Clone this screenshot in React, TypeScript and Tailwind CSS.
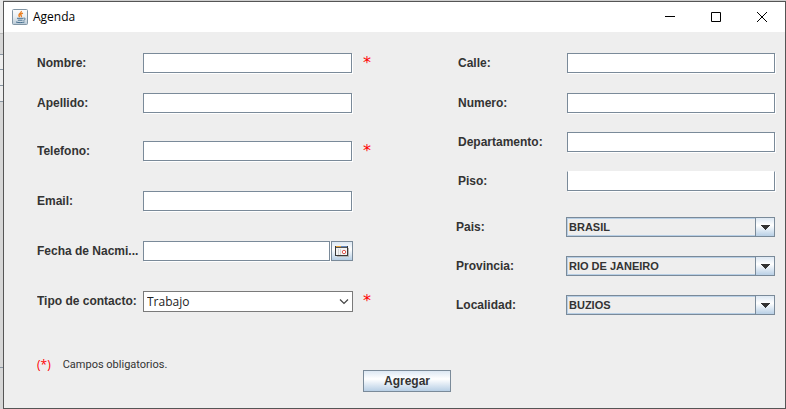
import React from "react";

const labelClass = "h-5 shrink-0 truncate text-xs leading-5 font-bold text-[#333]";
const fieldClass =
  "h-5 w-full min-w-0 border border-[#7a8a99] bg-white px-1 text-xs text-[#333] shadow-[1px_1px_0_#fff] outline-none";

function Field({ id, label, required, children }: { id: string; label: string; required?: boolean; children?: React.ReactNode }) {
  return (
    <div className="flex h-5 items-start">
      <label htmlFor={id} className={labelClass + " w-[106px]"}>{label}</label>
      <div className="flex w-[210px]">
        {children ?? <div className="w-full pr-px"><input id={id} type="text" className={fieldClass + " block"} /></div>}
      </div>
      {required && <span className="ml-[10px] h-5 font-['DejaVu_Sans'] text-base leading-5 text-[#f00]">*</span>}
    </div>
  );
}

function AddressField({ id, label, noTop }: { id: string; label: string; noTop?: boolean }) {
  return (
    <div className="flex h-5 items-center">
      <label htmlFor={id} className={labelClass + " w-[109px]"}>{label}</label>
      <input id={id} type="text" className={fieldClass + (noTop ? " border-t-white" : "")} />
    </div>
  );
}

function Combo({ id, label, value }: { id: string; label: string; value: string }) {
  return (
    <div className="-ml-0.5 flex h-5 items-center">
      <label htmlFor={id} className={labelClass + " w-[110px]"}>{label}</label>
      <div className="relative min-w-0 flex-1">
        <select id={id} className="block h-5 w-full appearance-none border border-[#7a8a99] bg-[#eee] pl-0.5 text-[11px] leading-4 font-bold text-[#333] shadow-[inset_1px_1px_0_#b8cfe5,inset_0_-1px_0_#b8cfe5] outline-none">
          <option>{value}</option>
        </select>
        <span className="pointer-events-none absolute inset-y-0 right-0 flex w-5 items-center justify-center border border-[#7a8a99] bg-linear-to-b from-[#dde8f3] via-white via-40% to-[#b8cfe5]">
          <svg width="10" height="5" viewBox="0 0 10 5" shapeRendering="crispEdges"><path d="M0 0h10L5 5Z" fill="#333" /></svg>
        </span>
      </div>
    </div>
  );
}

function JavaIcon() {
  return (
    <svg width="16" height="16" viewBox="0 0 16 16" fill="none">
      <defs>
        <linearGradient id="tile" x1="0" y1="0" x2="0" y2="16" gradientUnits="userSpaceOnUse">
          <stop stopColor="#fdfdfd" />
          <stop offset=".5" stopColor="#e8eef2" />
          <stop offset="1" stopColor="#b4c6d4" />
        </linearGradient>
      </defs>
      <rect x=".5" y=".5" width="15" height="15" rx="1" fill="url(#tile)" stroke="#8195a4" />
      <path d="M9.3 2C10 4.300 5 4.600 7.600 8M11 4.200C8.200 5 8.300 6.200 9.300 6.800C9.800 7.300 9.200 7.800 8.900 8" stroke="#ea7d1e" strokeWidth="1.300" />
      <path d="M5 9.300h6M5.800 11.200h4.700M4 13c2.500.8 5.800.8 8.500 0M11.300 9.200c2.700-.5 2.300 1.600.2 2.200" stroke="#47708f" />
    </svg>
  );
}

function CalendarIcon() {
  return (
    <svg width="14" height="11" viewBox="0 0 14 11" fill="none" shapeRendering="crispEdges">
      <path d="M13.500 2v8.500H2" stroke="#b5b5b5" />
      <path d="M.5.5h12v9H.5Z" fill="#f4f4f4" stroke="#3a3a3a" />
      <path d="M1 .5h5" stroke="#e9a23b" />
      <path d="M6 .5h6" stroke="#5f86bd" />
      <path d="M1 1.500h11" stroke="#555" />
      <path d="M3.500 3v6M5.500 3v6" stroke="#d5d5d5" />
      <circle cx="9" cy="6" r="1.700" fill="#fff" stroke="#df5a52" shapeRendering="auto" />
    </svg>
  );
}

export default function App() {
  return (
    <div className="flex min-h-screen bg-[#cfcfcf] font-['Liberation_Sans',Arial,sans-serif] text-xs">
      <div aria-hidden="true" className="flex w-[3px] shrink-0 flex-col bg-[#d6d6d6]">
        <div className="h-[34px] border-b border-[#bbb] bg-[#e8e8e8]" />
        <div className="mt-5 h-4 border-y border-[#8895a2] bg-[#eee]" />
        <div className="h-4 border-b border-[#8895a2] bg-[#eee]" />
        <div className="h-4 border-b border-[#8895a2] bg-[#eee]" />
        <div className="h-[266px] border-b border-[#8895a2]" />
      </div>
      <main className="mt-px flex flex-1 flex-col border border-[#555] bg-[#eee]">
        <header className="flex h-[30px] items-center bg-white pl-2">
          <JavaIcon />
          <h1 className="ml-[5px] flex-1 font-['Open_Sans',sans-serif] text-xs text-black">Agenda</h1>
          <button type="button" aria-label="Minimizar" className="flex h-full w-[46px] items-center justify-center">
            <svg width="10" height="10" viewBox="0 0 10 10" stroke="#000"><path d="M0 4.500h10" /></svg>
          </button>
          <button type="button" aria-label="Maximizar" className="flex h-full w-[46px] items-center justify-center">
            <svg width="10" height="10" viewBox="0 0 10 10" fill="none" stroke="#000"><path d="M.5.5h9v9h-9Z" /></svg>
          </button>
          <button type="button" aria-label="Cerrar" className="flex h-full w-[46px] items-center justify-center">
            <svg width="10" height="10" viewBox="0 0 10 10" stroke="#000"><path d="m0 0 10 10M10 0 0 10" /></svg>
          </button>
        </header>
        <form className="flex flex-1 flex-col" onSubmit={(event) => event.preventDefault()}>
          <div className="flex pt-[21px] pr-[10px] pl-[33px]">
            <div className="flex w-[421px] shrink-0 flex-col">
              <div className="flex flex-col gap-5">
                <Field id="nombre" label="Nombre:" required />
                <Field id="apellido" label="Apellido:" />
              </div>
              <div className="mt-7 flex flex-col gap-[30px]">
                <Field id="telefono" label="Telefono:" required />
                <Field id="email" label="Email:" />
                <Field id="fecha" label="Fecha de Nacmi...">
                  <input id="fecha" type="text" className={fieldClass} />
                  <button type="button" aria-label="Elegir fecha" className="ml-px flex h-5 w-[22px] shrink-0 items-center justify-center border border-[#7a8a99] bg-linear-to-b from-[#dde8f3] via-white via-40% to-[#b8cfe5]">
                    <CalendarIcon />
                  </button>
                </Field>
                <Field id="tipo" label="Tipo de contacto:" required>
                  <div className="relative w-full">
                    <select id="tipo" className="block h-[21px] w-full appearance-none border border-[#7a7a7a] bg-white pl-[3px] font-['Open_Sans',sans-serif] text-xs text-[#222] outline-none">
                      <option>Trabajo</option>
                    </select>
                    <svg className="pointer-events-none absolute top-2 right-1" width="10" height="6" viewBox="0 0 10 6" fill="none" stroke="#444" strokeWidth="1.200"><path d="m1 .5 4 4 4-4" /></svg>
                  </div>
                </Field>
              </div>
            </div>
            <div className="min-w-0 flex-1">
              <div className="flex flex-col gap-[19px]">
                <div className="flex flex-col gap-5">
                  <AddressField id="calle" label="Calle:" />
                  <AddressField id="numero" label="Numero:" />
                </div>
                <div className="flex flex-col gap-[19px]">
                  <AddressField id="departamento" label="Departamento:" />
                  <AddressField id="piso" label="Piso:" noTop />
                </div>
              </div>
              <div className="mt-[26px] flex flex-col gap-[19px]">
                <Combo id="pais" label="Pais:" value="BRASIL" />
                <Combo id="provincia" label="Provincia:" value="RIO DE JANEIRO" />
                <Combo id="localidad" label="Localidad:" value="BUZIOS" />
              </div>
            </div>
          </div>
          <footer className="mt-10 mb-3 flex items-start pl-[33px] text-[#333]">
            <p className="flex h-5 w-[326px] items-center gap-3 font-['Roboto',sans-serif] text-[11px] leading-5">
              <span className="font-['Open_Sans',sans-serif] text-xs text-[#f00]">(*)</span>
              <span>Campos obligatorios.</span>
            </p>
            <button type="submit" className="mt-[15px] flex h-[22px] w-[88px] items-center justify-center border border-[#7a8a99] bg-linear-to-b from-[#dde8f3] via-white via-40% to-[#b8cfe5] font-bold">
              Agregar
            </button>
          </footer>
        </form>
      </main>
    </div>
  );
}
